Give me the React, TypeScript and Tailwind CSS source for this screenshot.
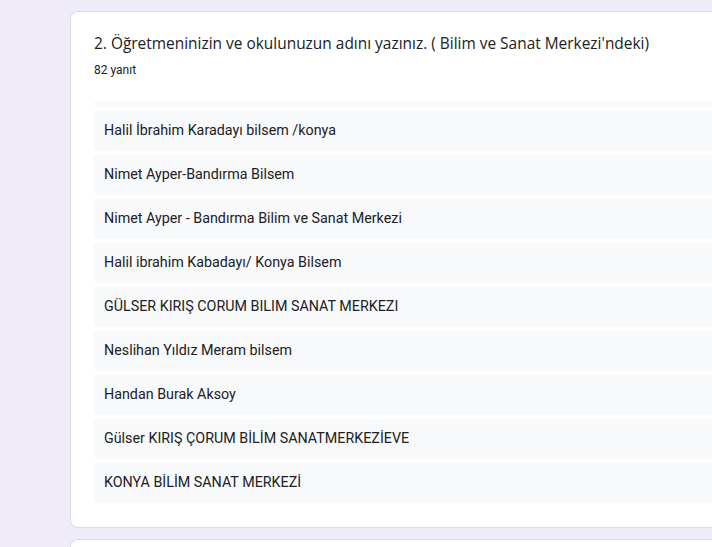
const answers = [
  'Halil İbrahim Karadayı bilsem /konya',
  'Nimet Ayper-Bandırma Bilsem',
  'Nimet Ayper - Bandırma Bilim ve Sanat Merkezi',
  'Halil ibrahim Kabadayı/ Konya Bilsem',
  'GÜLSER KIRIŞ CORUM BILIM SANAT MERKEZI',
  'Neslihan Yıldız Meram bilsem',
  'Handan Burak Aksoy',
  'Gülser KIRIŞ ÇORUM BİLİM SANATMERKEZİEVE',
  'KONYA BİLİM SANAT MERKEZİ',
];

function AnswerRow({ text }: { text: string }) {
  return (
    <div className="flex h-10 shrink-0 items-center rounded bg-[#f8f9fa] px-[10px] text-[14.3px] text-[#202124]">
      {text}
    </div>
  );
}

export default function App() {
  return (
    <div
      className="h-[547px] w-[712px] overflow-hidden bg-[#f0ebf8] pt-[11px] pl-[70px]"
      style={{ fontFamily: 'Roboto, Arial, sans-serif' }}
    >
      <div className="w-[760px] rounded-lg border border-[#dadce0] bg-white pb-[24px] pl-[23px] pr-6 pt-[19px]">
        <div className="text-[15.45px] leading-6 text-[#202124] font-['Open_Sans',sans-serif]">
          2. Öğretmeninizin ve okulunuzun adını yazınız. ( Bilim ve Sanat Merkezi'ndeki)
        </div>
        <div className="mt-[7px] text-[12px] leading-4 text-[#202124]">82 yanıt</div>
        <div className="mt-[24px] h-[401px] overflow-hidden">
          {/* list is scrolled: only the bottom edge of the previous answer shows */}
          <div className="-mt-[35px] flex flex-col gap-1">
            <div className="h-10 shrink-0 rounded bg-[#f8f9fa]" />
            {answers.map((a, i) => (
              <AnswerRow key={i} text={a} />
            ))}
          </div>
        </div>
      </div>
      <div className="mt-[11px] h-10 w-[760px] rounded-lg border border-[#dadce0] bg-white" />
    </div>
  );
}
